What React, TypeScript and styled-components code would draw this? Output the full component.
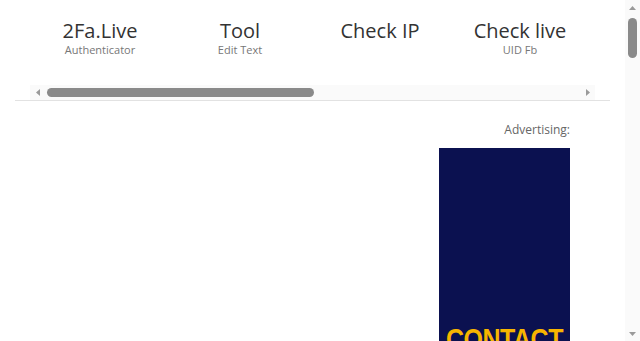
import { FC } from "react";
import styled, { createGlobalStyle } from "styled-components";

const GlobalStyle = createGlobalStyle`
html, body {
    margin: 0;
    padding: 0;
    background: #fff;
    font-family: "Open Sans", "Liberation Sans", sans-serif;
}
`

interface MenuEntry {
    title: string;
    sub?: string;
}

const menu: MenuEntry[] = [
    { title: "2Fa.Live", sub: "Authenticator" },
    { title: "Tool", sub: "Edit Text" },
    { title: "Check IP" },
    { title: "Check live", sub: "UID Fb" },
];

type Dir = "up" | "down" | "left" | "right";

const Arrow: FC<{ dir: Dir }> = ({ dir }) => {
    const pts = {
        up: "0,4 3.5,0 7,4",
        down: "0,0 7,0 3.5,4",
        left: "4,0 4,7 0,3.5",
        right: "0,0 4,3.5 0,7",
    }[dir];
    const horiz = dir === "left" || dir === "right";
    return (
        <svg width={horiz ? 4 : 7} height={horiz ? 7 : 4} viewBox={horiz ? "0 0 4 7" : "0 0 7 4"}>
            <polygon points={pts} fill="#9a9a9a" />
        </svg>
    );
};

const MenuItem: FC<{ entry: MenuEntry }> = ({ entry }) => (
    <StyledItem>
        <StyledTitle>{entry.title}</StyledTitle>
        {entry.sub && <StyledSub>{entry.sub}</StyledSub>}
    </StyledItem>
);

export default function App() {
    return (
        <StyledWindow>
            <GlobalStyle />
            <StyledPage>
                <StyledHeader>
                    <StyledMenu>
                        {menu.map((m, i) => <MenuItem key={i} entry={m} />)}
                    </StyledMenu>
                    <StyledHBar>
                        <StyledButton><Arrow dir="left" /></StyledButton>
                        <StyledHTrack>
                            <StyledHThumb />
                        </StyledHTrack>
                        <StyledButton><Arrow dir="right" /></StyledButton>
                    </StyledHBar>
                </StyledHeader>
                <StyledContent>
                    <StyledAside>
                        <StyledAdLabel>Advertising:</StyledAdLabel>
                        <StyledBanner>
                            <StyledBannerText>CONTACT</StyledBannerText>
                        </StyledBanner>
                    </StyledAside>
                </StyledContent>
            </StyledPage>
            <StyledVBar>
                <StyledButton><Arrow dir="up" /></StyledButton>
                <StyledVTrack>
                    <StyledVThumb />
                </StyledVTrack>
                <StyledButton><Arrow dir="down" /></StyledButton>
            </StyledVBar>
        </StyledWindow>
    );
}

const StyledWindow = styled.div`
display: flex;
height: 100vh;
overflow: hidden;
`
const StyledPage = styled.div`
flex: 1;
min-width: 0;
overflow: hidden;
`
const StyledHeader = styled.div`
margin: 0 15px;
padding: 0 15px;
border-bottom: 1px solid #e2e2e2;
`
const StyledMenu = styled.div`
display: flex;
`
const StyledItem = styled.div`
width: 140px;
flex-shrink: 0;
height: 85px;
padding-top: 18px;
box-sizing: border-box;
display: flex;
flex-direction: column;
align-items: center;
`
const StyledTitle = styled.span`
font-size: 20px;
line-height: 26px;
color: #333;
`
const StyledSub = styled.span`
font-size: 11px;
line-height: 12px;
color: #777;
`
const StyledHBar = styled.div`
display: flex;
height: 15px;
background: #fafafa;
`
const StyledButton = styled.div`
width: 15px;
height: 15px;
flex-shrink: 0;
display: flex;
align-items: center;
justify-content: center;
`
const StyledHTrack = styled.div`
flex: 1;
display: flex;
align-items: center;
padding: 0 2px;
`
const StyledHThumb = styled.div`
width: 267px;
height: 9px;
border-radius: 5px;
background: #8a8a8a;
`
const StyledVBar = styled.div`
width: 15px;
flex-shrink: 0;
display: flex;
flex-direction: column;
background: #fafafa;
`
const StyledVTrack = styled.div`
flex: 1;
display: flex;
justify-content: center;
padding: 3px 0;
`
const StyledVThumb = styled.div`
width: 9px;
height: 40px;
border-radius: 5px;
background: #8a8a8a;
`
const StyledContent = styled.div`
display: flex;
justify-content: flex-end;
padding: 20px 55px 0 0;
`
const StyledAside = styled.div`
display: flex;
flex-direction: column;
align-items: flex-end;
`
const StyledAdLabel = styled.div`
font-size: 12px;
line-height: 17px;
color: #666;
margin-bottom: 10px;
`
const StyledBanner = styled.div`
width: 131px;
height: 600px;
background: #0b1150;
display: flex;
justify-content: center;
padding-top: 176px;
box-sizing: border-box;
`
const StyledBannerText = styled.span`
font-family: "Liberation Sans", sans-serif;
font-weight: 900;
font-size: 25px;
letter-spacing: -0.5px;
color: #f7b500;
transform: scaleY(1.2);
height: 30px;
`
